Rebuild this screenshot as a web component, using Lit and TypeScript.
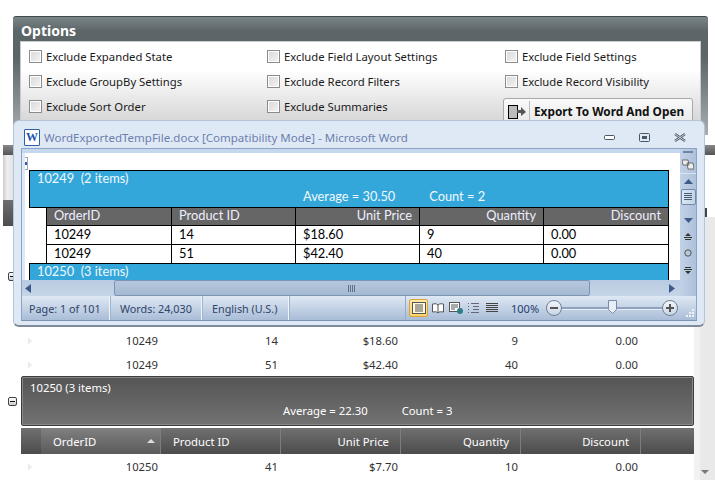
import { LitElement, html, css, svg } from "lit";
import { customElement } from "lit/decorators.js";

const OPTIONS = [
  ["Exclude Expanded State", "Exclude Field Layout Settings", "Exclude Field Settings"],
  ["Exclude GroupBy Settings", "Exclude Record Filters", "Exclude Record Visibility"],
  ["Exclude Sort Order", "Exclude Summaries", ""],
];
const WORD_ROWS = [
  ["10249", "14", "$18.60", "9", "0.00"],
  ["10249", "51", "$42.40", "40", "0.00"],
];
const WORD_HEAD = ["OrderID", "Product ID", "Unit Price", "Quantity", "Discount"];

@customElement("app-root")
export class AppRoot extends LitElement {
  static styles = css`
    :host { display: block; width: 715px; height: 500px; position: relative; overflow: hidden; background: #fff; font-family: "Noto Sans", sans-serif; font-size: 11.3px; color: #222; }
    .options { margin: 16px 0 0 13px; width: 695px; height: 119px; box-sizing: border-box; padding: 0 7px; border-radius: 3px 3px 0 0; border-top: 1px solid #3f4a4c; background: linear-gradient(#7c8688 0, #5c6669 14px, #5b6568 40px, #a9aeb1 119px); display: flex; flex-direction: column; }
    .options h2 { margin: 0; padding-left: 1px; height: 24px; font: bold 14px/28px "Noto Sans", sans-serif; color: #fff; }
    .opt-body { flex: 1; border: 1px solid #c8cacb; background: linear-gradient(#fff 0, #fff 28px, #d6d6d6 80px); display: grid; grid-template-columns: 238px 238px 1fr; grid-auto-rows: 25px; padding: 2px 0 0 8px; }
    .chk { display: flex; align-items: center; gap: 4px; color: #1a1a1a; font-size: 11.3px; }
    .chk i { width: 11px; height: 11px; border: 1px solid #8b8b8b; background: linear-gradient(135deg, #d8d8d8, #f4f4f4); box-shadow: inset 0 0 0 1px #fff; }
    .export { margin: 4px 0 0 -2px; width: 190px; height: 30px; box-sizing: border-box; border: 1px solid #a9a9a9; border-radius: 3px; background: linear-gradient(#fafafa, #e6e6e6); display: flex; align-items: center; font: bold 11.8px "Noto Sans", sans-serif; color: #111; padding-bottom: 4px; }
    .export svg { margin: 0 2px 0 4px; }
    .export span { border-left: 1px solid #bbb; padding-left: 4px; line-height: 20px; }

    .grid { margin: 10px 0 0 3px; display: flex; height: 335px; }
    .gutter { width: 18px; display: flex; flex-direction: column; }
    .strip { width: 10px; }
    .s1 { height: 10px; background: linear-gradient(#888, #555); }
    .s2 { height: 45px; background: linear-gradient(90deg, #ccc, #eee 40%, #e4e4e4); }
    .s3 { height: 26px; background: linear-gradient(#6e6e6e, #4d4d4d); }
    .toggle { width: 9px; height: 9px; box-sizing: border-box; margin-left: 5px; border: 1px solid #444; border-radius: 2px; background: linear-gradient(#fff, #ccc); display: flex; align-items: center; justify-content: center; }
    .toggle::after { content: ""; width: 5px; height: 1px; background: #111; }
    .t1 { margin-top: 46px; }
    .t2 { margin-top: 116px; }
    .main { width: 673px; display: flex; flex-direction: column; padding-top: 183px; box-sizing: border-box; }
    .row { display: grid; grid-template-columns: 20px repeat(5, 120px) 53px; height: 24px; align-items: center; color: #333; }
    .row.last { height: 26px; box-sizing: border-box; padding-bottom: 2px; }
    .row .n { text-align: right; padding-right: 3px; }
    .row svg { margin-left: 6px; }
    .group { height: 50px; box-sizing: border-box; border: 1px solid #3d3d3d; border-radius: 2px; outline: 1px solid #888; outline-offset: -2px; background: linear-gradient(#555, #727272); color: #fff; position: relative; display: flex; flex-direction: column; }
    .group .t { padding: 3px 0 0 8px; height: 26px; box-sizing: border-box; }
    .group .s { display: flex; padding-left: 261px; gap: 34px; }
    .ghead { margin-top: 2px; height: 26px; display: grid; grid-template-columns: 20px repeat(5, 120px) 53px; background: linear-gradient(#707070, #4c4c4c); color: #fff; align-items: stretch; }
    .ghead div { border-right: 1px solid #7d7d7d; display: flex; align-items: center; justify-content: flex-end; padding: 0 11px; box-sizing: border-box; }
    .ghead div.blank { border-right: 0; padding: 0; }
    .ghead div.left { justify-content: space-between; padding-left: 12px; }
    .ghead div.sort { background: linear-gradient(#808080, #5a5a5a); padding-right: 5px; }
    .rail { width: 21px; display: flex; flex-direction: column; }
    .r1 { height: 10px; margin-left: 11px; background: linear-gradient(#888, #555); }
    .r2 { height: 62px; display: flex; align-items: flex-end; padding-left: 11px; }
    .r2::after { content: ""; width: 2px; height: 9px; background: #444; }
    .r3 { flex: 1; background: linear-gradient(90deg, #f2f2f2 30%, #e9e9e9 30%); display: flex; flex-direction: column; justify-content: flex-end; align-items: center; padding-bottom: 6px; }

    .word { position: absolute; left: 13px; top: 120px; width: 692px; height: 207px; box-sizing: border-box; padding: 0 7px 4px; background: #dfe9f5; border: 1px solid #b5c4d6; border-bottom: 2px solid #7f8b99; border-radius: 6px; display: flex; flex-direction: column; }
    .titlebar { height: 27px; box-sizing: border-box; padding-top: 5px; flex: none; display: flex; align-items: center; color: #6c7fae; font-size: 11.5px; }
    .wicon { width: 14px; height: 15px; margin: 0 4px 0 3px; border: 1px solid #2b5fa8; border-radius: 1px; background: #fff; color: #1a55ae; font: bold 12px/15px "Liberation Serif", serif; text-align: center; flex: none; }
    .tt { flex: 1; }
    .tbtn { display: flex; width: 82px; gap: 24px; align-items: center; margin-right: 11px; }
    .frame { flex: 1; display: flex; flex-direction: column; border: 1px solid #8ba4c4; border-bottom-color: #7e94b2; min-height: 0; }
    .ribbon { height: 4px; flex: none; background: #c6d8ee; }
    .docrow { flex: 1; display: flex; min-height: 0; }
    .docwrap { flex: 1; display: flex; flex-direction: column; min-width: 0; }
    .doc { height: 127px; flex: none; box-sizing: border-box; margin-left: 3px; background: #fff; padding-top: 17px; padding-left: 4px; position: relative; overflow: hidden; font-family: Lato, sans-serif; font-size: 12.8px; color: #000; }
    .mark { position: absolute; left: 0; top: 4px; width: 2px; height: 11px; border: 1px solid #9aa7b8; border-left: 0; background: linear-gradient(#fff 40%, #3358b0 40%, #3358b0 60%, #fff 60%); }
    table { border-collapse: collapse; table-layout: fixed; width: 639px; }
    td { border: 1px solid #000; height: 19px; padding: 0 0 2px 7px; line-height: 15px; box-sizing: border-box; white-space: nowrap; }
    tr.h td { height: 18px; }
    td.blue { background: #34a7da; color: #f0f8fd; padding: 0 0 0 7px; vertical-align: top; height: 36px; }
    td.blue div { height: 18px; line-height: 14px; }
    td.blue .sum { display: flex; padding-left: 266px; gap: 34px; }
    td.nil { border: 0; border-right: 1px solid #000; }
    td.hd { background: #666; color: #eef; }
    td.r { text-align: right; padding-right: 7px; }
    .hscroll { height: 16px; flex: none; display: flex; align-items: stretch; background: linear-gradient(#b9cbe2, #c6d5e8); }
    .hscroll .arr { display: flex; align-items: center; justify-content: center; }
    .thumb { width: 476px; margin-left: 0; box-sizing: border-box; border: 1px solid #7d95b5; border-radius: 2px; background: linear-gradient(#b5c7de, #a5b9d2); display: flex; align-items: center; justify-content: center; }
    .vscroll { width: 16px; flex: none; display: flex; flex-direction: column; align-items: center; background: linear-gradient(90deg, #c2d2e7, #adc1da); }
    .vscroll .cell { display: flex; align-items: center; justify-content: center; width: 100%; flex: none; box-sizing: border-box; }
    .vthumb { width: 15px; height: 16px; box-sizing: border-box; border: 1px solid #7189aa; border-radius: 2px; background: linear-gradient(90deg, #dbe6f3, #c3d4e8); display: flex; align-items: center; justify-content: center; flex: none; }
    .status { height: 24px; flex: none; display: flex; align-items: center; background: linear-gradient(#dfe8f4, #a9bdd7); color: #2f4468; font-size: 10.8px; }
    .seg { height: 100%; display: flex; align-items: center; box-sizing: border-box; padding-left: 7px; border-right: 1px solid #f0f5fa; box-shadow: 1px 0 0 #9fb2cc; white-space: nowrap; }
    .views { display: flex; align-items: center; margin-left: 116px; border-left: 1px solid #96abc7; padding-left: 3px; height: 100%; gap: 1px; }
    .vb { width: 17px; height: 18px; display: flex; align-items: center; justify-content: center; }
    .vb.on { width: 19px; box-sizing: border-box; border: 1px solid #d9a43c; border-radius: 2px; background: linear-gradient(#ffe9a0, #fcd36a); }
    .pct { margin-left: 11px; width: 35px; font-size: 11px; color: #23406e; }
    .zoom { display: flex; align-items: center; width: 132px; }
    .zbtn { width: 16px; height: 16px; box-sizing: border-box; border: 1px solid #6f7f95; border-radius: 50%; background: linear-gradient(#f4f7fb, #c8d4e3); flex: none; display: flex; align-items: center; justify-content: center; color: #444; }
    .track { flex: 1; height: 2px; background: #8ea2bd; box-shadow: 0 1px 0 #e6edf6; position: relative; display: flex; justify-content: center; }
    .track svg { position: absolute; top: -7px; }
    .sgrip { margin-left: 8px; align-self: flex-end; margin-bottom: 2px; }
  `;

  private chk(label: string) {
    return label ? html`<label class="chk"><i></i>${label}</label>` : html`<div class="export"><svg width="19" height="17" viewBox="0 0 19 17"><rect x="0.5" y="2.5" width="9" height="13" fill="#bbb" stroke="#000"/><path d="M9 7h4V4l5 5-5 4v-3H9z" fill="#555"/></svg><span>Export To Word And Open</span></div>`;
  }

  private tri(d: string, w = 8, h = 8, fill = "#dfdfdf") {
    return html`<svg width=${w} height=${h} viewBox="0 0 8 8"><path d=${d} fill=${fill}/></svg>`;
  }

  private gridRow(vals: string[], last = false) {
    return html`<div class="row ${last ? "last" : ""}">
      <span>${this.tri("M1 0l5 4-5 4z", 7, 8, "#ebebeb")}</span>
      ${vals.map((v) => html`<span class="n">${v}</span>`)}<span></span>
    </div>`;
  }

  private lines(n: number, w: number, c = "#4a5a70", step = 2) {
    const rows = Array.from({ length: n }, (_, i) => svg`<rect x="0" y=${i * step} width=${w} height="1" fill=${c}/>`);
    return html`<svg width=${w} height=${n * step}>${rows}</svg>`;
  }

  render() {
    return html`
      <section class="options">
        <h2>Options</h2>
        <div class="opt-body">
          ${OPTIONS.map((r) => r.map((o) => this.chk(o)))}
        </div>
      </section>

      <section class="grid">
        <div class="gutter">
          <div class="strip s1"></div><div class="strip s2"></div><div class="strip s3"></div>
          <div class="toggle t1"></div><div class="toggle t2"></div>
        </div>
        <div class="main">
          ${this.gridRow(["10249", "14", "$18.60", "9", "0.00"])}
          ${this.gridRow(["10249", "51", "$42.40", "40", "0.00"])}
          <div class="group">
            <div class="t">10250 (3 items)</div>
            <div class="s"><span>Average = 22.30</span><span>Count = 3</span></div>
          </div>
          <div class="ghead">
            <div class="blank"></div>
            <div class="left sort"><span>OrderID</span><svg width="8" height="4" viewBox="0 0 8 4"><path d="M0 4l4-4 4 4z" fill="#ddd"/></svg></div>
            <div class="left"><span>Product ID</span></div>
            <div>Unit Price</div><div>Quantity</div><div>Discount</div>
            <div class="blank"></div>
          </div>
          ${this.gridRow(["10250", "41", "$7.70", "10", "0.00"], true)}
        </div>
        <div class="rail">
          <div class="r1"></div><div class="r2"></div>
          <div class="r3"><svg width="8" height="4" viewBox="0 0 8 4"><path d="M0 0h8l-4 4z" fill="#777"/></svg></div>
        </div>
      </section>

      <section class="word">
        <div class="titlebar">
          <span class="wicon">W</span>
          <span class="tt">WordExportedTempFile.docx [Compatibility Mode] - Microsoft Word</span>
          <div class="tbtn">
            <svg width="11" height="5"><rect x=".5" y=".5" width="10" height="4" rx="1" fill="#fff" stroke="#4a5568"/></svg>
            <svg width="11" height="9"><rect x=".5" y=".5" width="10" height="8" rx="1" fill="none" stroke="#4a5568"/><rect x="3" y="3" width="5" height="3" fill="#4a5568"/></svg>
            <svg width="12" height="9" viewBox="0 0 12 9"><path d="M1 1l10 7M11 1L1 8" stroke="#4a5568" stroke-width="2.4"/><path d="M1 1l10 7M11 1L1 8" stroke="#e8eef6" stroke-width=".8"/></svg>
          </div>
        </div>
        <div class="frame">
          <div class="docrow">
            <div class="docwrap">
              <div class="ribbon"></div>
              <div class="doc">
                <span class="mark"></span>
                <table>
                  <colgroup><col style="width:17px"/><col style="width:125px"/><col style="width:124px"/><col style="width:124px"/><col style="width:124px"/><col style="width:125px"/></colgroup>
                  <tr><td class="blue" colspan="6"><div>10249&nbsp; (2 items)</div><div class="sum"><span>Average = 30.50</span><span>Count = 2</span></div></td></tr>
                  <tr class="h"><td class="nil"></td>${WORD_HEAD.map((h, i) => html`<td class="hd ${i >= 2 ? "r" : ""}">${h}</td>`)}</tr>
                  ${WORD_ROWS.map((r) => html`<tr><td class="nil"></td>${r.map((c) => html`<td>${c}</td>`)}</tr>`)}
                  <tr><td class="blue" colspan="6"><div>10250&nbsp; (3 items)</div></td></tr>
                </table>
              </div>
              <div class="hscroll">
                <div class="arr" style="width:92px"><svg width="6" height="9" style="margin-right:80px"><path d="M6 0v9L0 4.500z" fill="#3f5a8a"/></svg></div>
                <div class="thumb"><svg width="8" height="7">${[0, 2, 4, 6].map((x) => svg`<rect x=${x} width="1" height="7" fill="#5d7290"/>`)}</svg></div>
                <div class="arr" style="flex:1;justify-content:flex-end;padding-right:5px"><svg width="6" height="9"><path d="M0 0v9l6-4.500z" fill="#3f5a8a"/></svg></div>
              </div>
            </div>
            <div class="vscroll">
              <div class="cell" style="height:6px"><svg width="10" height="2"><rect width="10" height="2" fill="#6d87aa"/></svg></div>
              <div class="cell" style="height:18px">
                <svg width="12" height="11" viewBox="0 0 12 11"><path d="M0 1h6l1 5H1zM5 4h6l1 6H6z" fill="#eee" stroke="#555" stroke-width=".8"/></svg>
              </div>
              <div class="cell" style="height:16px;border-top:1px solid #dbe5f1"><svg width="9" height="5"><path d="M0 5l4.500-5L9 5z" fill="#3f5a8a"/></svg></div>
              <div class="vthumb">${this.lines(4, 8)}</div>
              <div class="cell" style="height:24px;padding-top:6px"><svg width="9" height="5"><path d="M0 0l4.500 5L9 0z" fill="#3f5a8a"/></svg></div>
              <div class="cell" style="height:14px"><svg width="8" height="7"><path d="M4 0l3 3H1zM0 4h8v1H0zM1 6h6v1H1z" fill="#333"/></svg></div>
              <div class="cell" style="height:20px"><svg width="8" height="8"><circle cx="4" cy="4" r="3.200" fill="#b6c5d9" stroke="#555"/></svg></div>
              <div class="cell" style="height:14px"><svg width="8" height="7"><path d="M1 0h6v1H1zM0 2h8v1H0zM1 4h6L4 7z" fill="#333"/></svg></div>
            </div>
          </div>
          <div class="status">
            <div class="seg" style="width:88px">Page: 1 of 101</div>
            <div class="seg" style="width:92px;padding-left:10px">Words: 24,030</div>
            <div class="seg" style="width:87px;padding-left:10px">English (U.S.)</div>
            <div class="views">
              <div class="vb on"><svg width="14" height="12"><rect x=".5" y=".5" width="13" height="11" fill="#fff8df" stroke="#555"/><path d="M3 3h8M3 5h8M3 7h8M3 9h8" stroke="#555"/></svg></div>
              <div class="vb"><svg width="12" height="11" viewBox="0 0 12 11"><path d="M6 2C4 0 2 1 .5 1v8c2 0 4-1 5.500 1 1.500-2 3.500-1 5.500-1V1C10 1 8 0 6 2zV10" fill="#fff" stroke="#555"/></svg></div>
              <div class="vb"><svg width="14" height="12" viewBox="0 0 14 12"><rect x=".5" y=".5" width="10" height="9" fill="#fff" stroke="#555"/><path d="M2 3h7M2 5h7M2 7h4" stroke="#555"/><circle cx="11" cy="9" r="3" fill="#2e7d8c"/></svg></div>
              <div class="vb"><svg width="11" height="10" viewBox="0 0 11 10"><path d="M0 .5h1M3 .5h8M0 3.500h1M5 3.500h6M0 6.500h1M5 6.500h6M0 9.500h1M3 9.500h8" stroke="#667"/></svg></div>
              <div class="vb"><svg width="12" height="10" viewBox="0 0 12 10"><path d="M0 .5h12M0 2.500h12M0 4.500h12M0 6.500h12M0 8.500h12" stroke="#444"/></svg></div>
            </div>
            <span class="pct">100%</span>
            <div class="zoom">
              <div class="zbtn"><svg width="8" height="2"><rect width="8" height="2" fill="#555"/></svg></div>
              <div class="track"><svg width="9" height="14" viewBox="0 0 9 14"><path d="M.5.5h8v9l-4 4-4-4z" fill="#e8eef6" stroke="#7a8ba3"/></svg></div>
              <div class="zbtn"><svg width="8" height="8"><path d="M0 3h8v2H0zM3 0h2v8H3z" fill="#555"/></svg></div>
            </div>
            <svg class="sgrip" width="9" height="9">${[[6, 0], [3, 3], [6, 3], [0, 6], [3, 6], [6, 6]].map(([x, y]) => svg`<rect x=${x} y=${y} width="2" height="2" fill="#eef3f9"/>`)}</svg>
          </div>
        </div>
      </section>
    `;
  }
}
